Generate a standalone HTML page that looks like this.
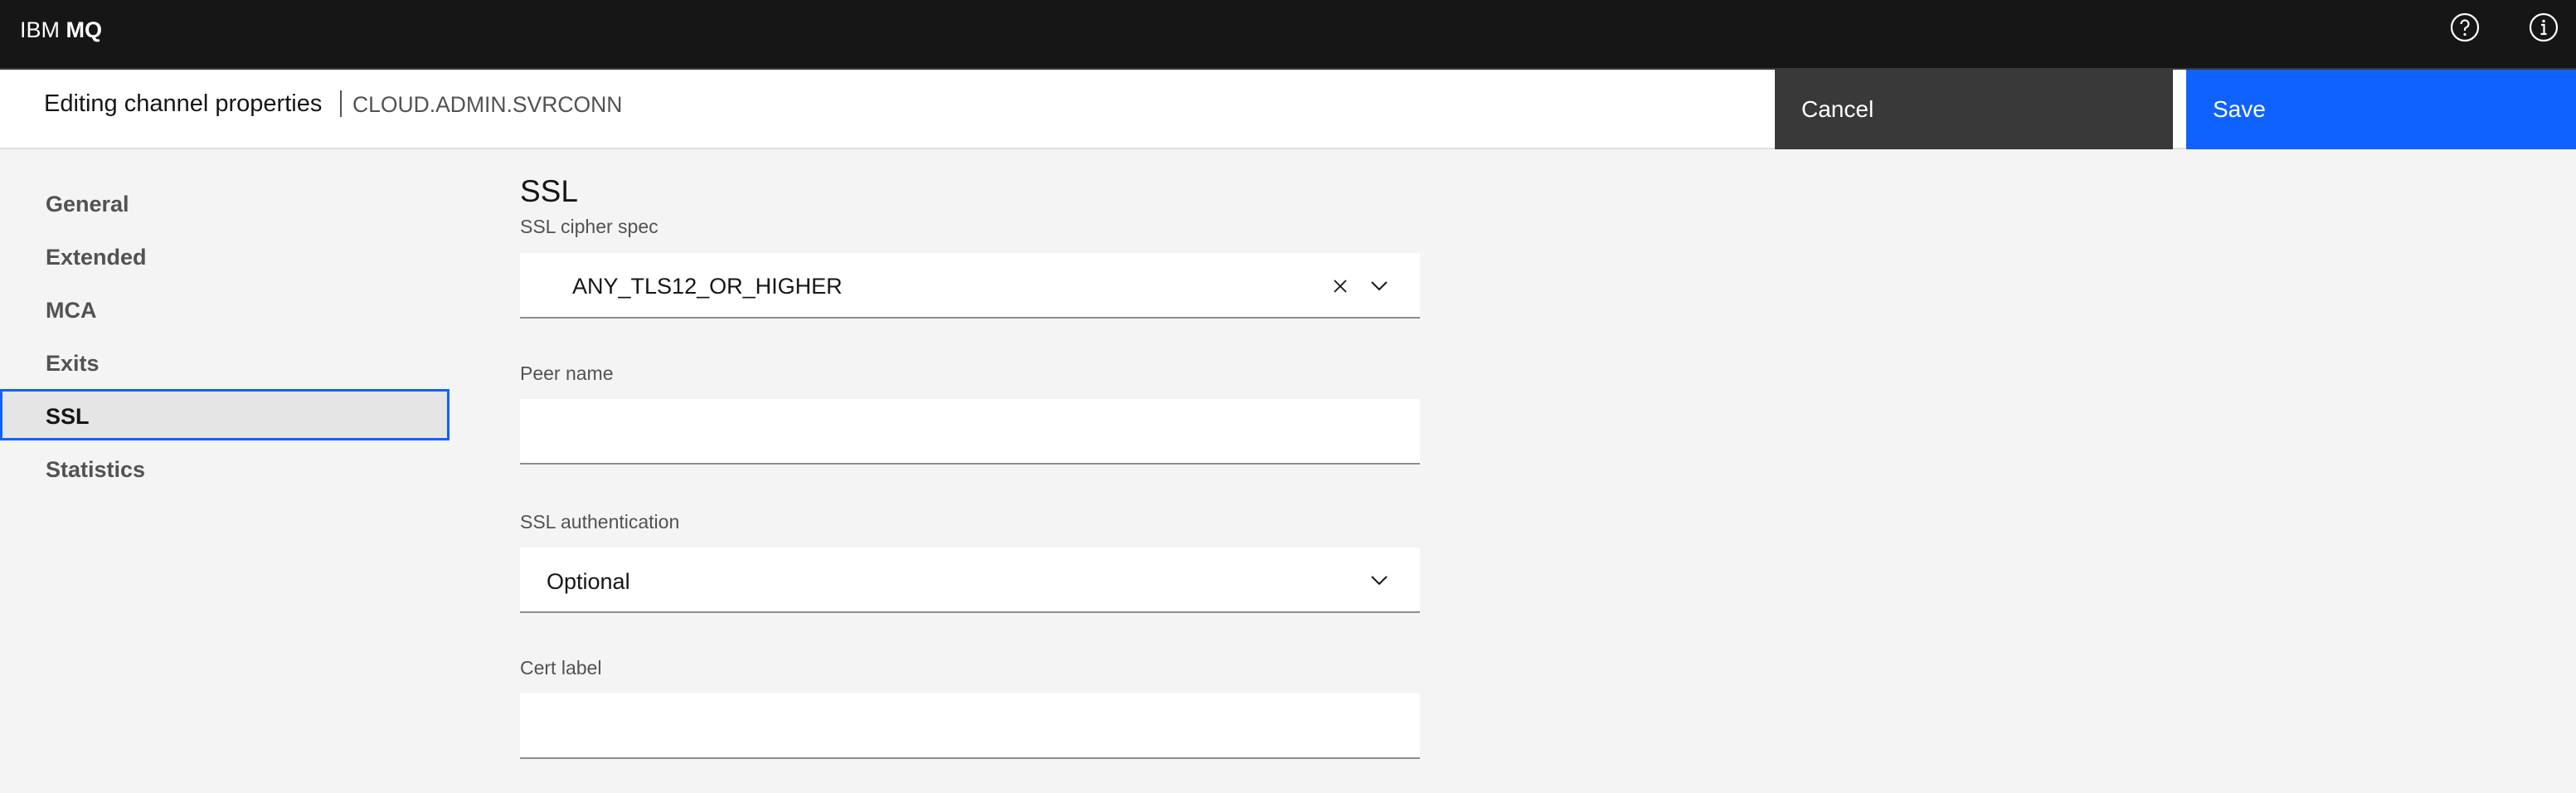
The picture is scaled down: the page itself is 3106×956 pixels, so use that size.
<!DOCTYPE html>
<html><head><meta charset="utf-8"><style>
*{margin:0;padding:0;box-sizing:border-box}
body{width:3106px;height:956px;background:#f4f4f4;font-family:"Liberation Sans",sans-serif;position:relative;overflow:hidden;color:#161616}
.a{position:absolute;white-space:nowrap;line-height:1}
.hdr{position:absolute;left:0;top:0;width:3106px;height:82px;background:#161616}
.hl{position:absolute;left:0;top:82px;width:3106px;height:2px;background:#393939}
.bar{position:absolute;left:0;top:84px;width:3106px;height:94px;background:#fff}
.bl{position:absolute;left:0;top:178px;width:3106px;height:2px;background:#e0e0e0}
.nav{font-size:27px;font-weight:bold;color:#525252;left:55px}
.lbl{font-size:23px;color:#525252;left:627px}
.fld{position:absolute;left:627px;width:1085px;height:79px;background:#fff;border-bottom:2px solid #8d8d8d}
</style></head><body>
<div class="hdr"></div><div class="hl"></div>
<div class="a" style="left:24px;top:23px;font-size:27px;color:#fff">IBM <b>MQ</b></div>
<svg class="a" style="left:2954px;top:15px" width="36" height="36" viewBox="0 0 36 36"><circle cx="18" cy="18" r="16" fill="none" stroke="#fff" stroke-width="2.2"/><path d="M13.5 14a4.5 4.5 0 1 1 6 4.2c-1 .5-1.5 1.2-1.5 2.3V22" fill="none" stroke="#fff" stroke-width="2.2"/><circle cx="18" cy="26.5" r="1.6" fill="#fff"/></svg>
<svg class="a" style="left:3049px;top:15px" width="36" height="36" viewBox="0 0 36 36"><circle cx="18" cy="18" r="16" fill="none" stroke="#fff" stroke-width="2.2"/><path d="M15 15h3.5v11M14.5 26h7" fill="none" stroke="#fff" stroke-width="2.2"/><circle cx="18" cy="10.5" r="1.7" fill="#fff"/></svg>
<div class="bar"></div><div class="bl"></div>
<div class="a" style="left:53px;top:111px;font-size:29px;color:#161616">Editing channel properties</div>
<div class="a" style="left:410px;top:109px;width:2px;height:32px;background:#525252"></div>
<div class="a" style="left:425px;top:113px;font-size:26.5px;color:#525252">CLOUD.ADMIN.SVRCONN</div>
<div class="a" style="left:2140px;top:84px;width:480px;height:96px;background:#393939"></div>
<div class="a" style="left:2172px;top:118px;font-size:28px;color:#fff">Cancel</div>
<div class="a" style="left:2636px;top:84px;width:470px;height:96px;background:#0f62fe"></div>
<div class="a" style="left:2668px;top:118px;font-size:28px;color:#fff">Save</div>
<div class="a nav" style="top:233px">General</div>
<div class="a nav" style="top:297px">Extended</div>
<div class="a nav" style="top:361px">MCA</div>
<div class="a nav" style="top:425px">Exits</div>
<div class="a" style="left:0;top:469px;width:542px;height:62px;background:#e5e5e5;border:3px solid #0f62fe"></div>
<div class="a nav" style="top:489px;color:#161616">SSL</div>
<div class="a nav" style="top:553px">Statistics</div>
<div class="a" style="left:627px;top:212px;font-size:37px">SSL</div>
<div class="a lbl" style="top:262px">SSL cipher spec</div>
<div class="fld" style="top:305px"></div>
<div class="a" style="left:690px;top:332px;font-size:27px">ANY_TLS12_OR_HIGHER</div>
<svg class="a" style="left:1606px;top:335px" width="20" height="20" viewBox="0 0 20 20"><path d="M3 3L17 17M17 3L3 17" stroke="#161616" stroke-width="1.8"/></svg>
<svg class="a" style="left:1652px;top:337px" width="22" height="14" viewBox="0 0 22 14"><path d="M2 3l9 9 9-9" fill="none" stroke="#161616" stroke-width="2"/></svg>
<div class="a lbl" style="top:439px">Peer name</div>
<div class="fld" style="top:481px"></div>
<div class="a lbl" style="top:618px">SSL authentication</div>
<div class="fld" style="top:660px"></div>
<div class="a" style="left:659px;top:688px;font-size:27px">Optional</div>
<svg class="a" style="left:1652px;top:692px" width="22" height="14" viewBox="0 0 22 14"><path d="M2 3l9 9 9-9" fill="none" stroke="#161616" stroke-width="2"/></svg>
<div class="a lbl" style="top:794px">Cert label</div>
<div class="fld" style="top:836px"></div>
</body></html>
